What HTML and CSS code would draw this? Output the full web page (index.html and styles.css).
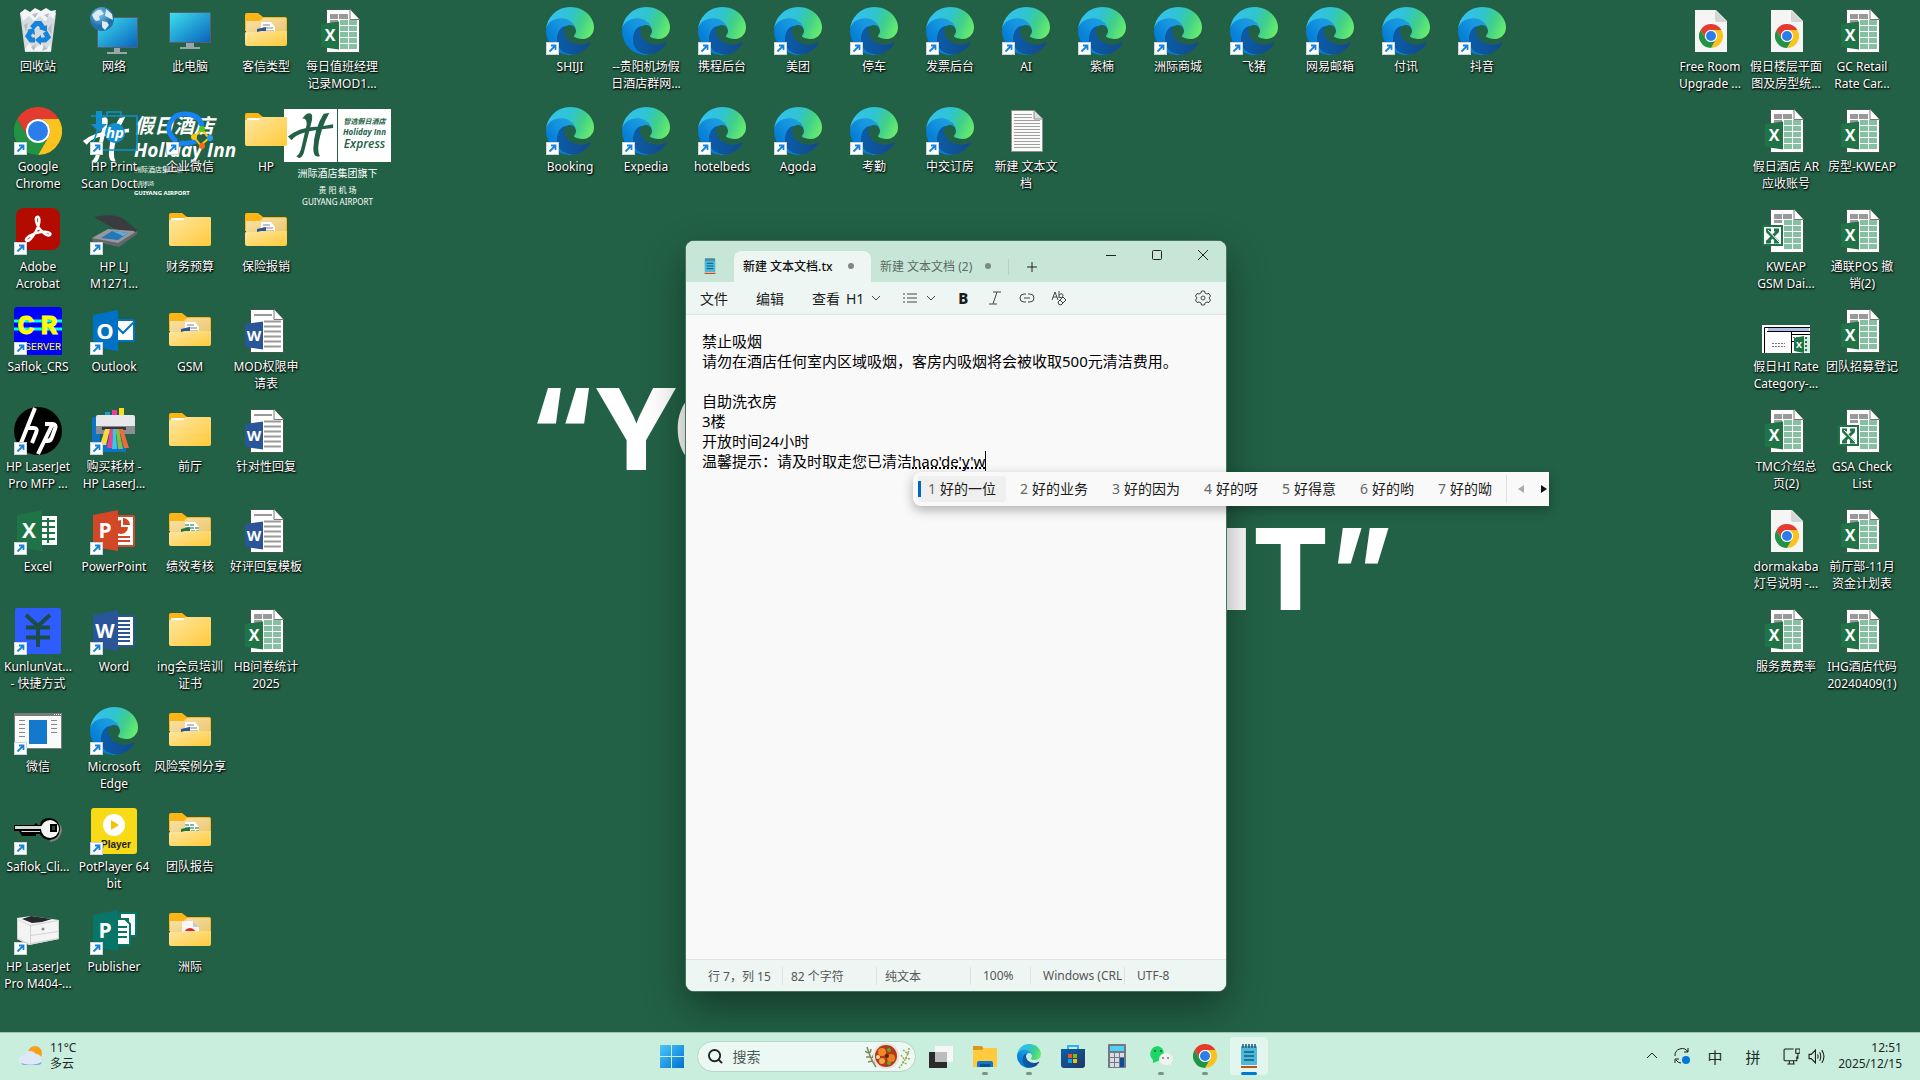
FILE: index.html
```html
<!DOCTYPE html>
<html lang="zh-CN">
  <head>
    <meta charset="UTF-8" />
    <meta name="viewport" content="width=device-width, initial-scale=1.0" />
    <title>桌面</title>
    <link rel="stylesheet" href="styles.css">
  </head>
  <body>
    <!-- Shared gradients, kept apart because they need a rendered svg -->
    <svg class="paints" aria-hidden="true">
      <defs>
        <linearGradient id="gScreen" x1="0" y1="0" x2="1" y2="1"><stop offset="0" stop-color="#3ce0ee" /><stop offset="1" stop-color="#0a62bd" /></linearGradient>
        <linearGradient id="gFolder" x1="0" y1="0" x2="1" y2="1"><stop offset="0" stop-color="#ffe7a2" /><stop offset="1" stop-color="#ffca3a" /></linearGradient>
        <linearGradient id="gFolderIn" x1="0" y1="0" x2="1" y2="1"><stop offset="0" stop-color="#fbe3a8" /><stop offset="1" stop-color="#e8c46c" /></linearGradient>
        <linearGradient id="gEdgeDark" x1="0.2" y1="0" x2="1" y2="0"><stop offset="0" stop-color="#0c59a4" /><stop offset="1" stop-color="#114a8b" /></linearGradient>
        <linearGradient id="gEdgeBlue" x1="0.9" y1="0.3" x2="0.2" y2="1"><stop offset="0" stop-color="#1b9de2" /><stop offset="0.3" stop-color="#1595df" /><stop offset="0.7" stop-color="#0680d7" /><stop offset="1" stop-color="#0078d4" /></linearGradient>
        <linearGradient id="gEdgeGreen" x1="0" y1="0.3" x2="1" y2="0.6"><stop offset="0" stop-color="#35c1f1" /><stop offset="0.45" stop-color="#2fc4d0" /><stop offset="0.72" stop-color="#40cf8b" /><stop offset="1" stop-color="#66eb6e" /></linearGradient>
        <linearGradient id="gWin" x1="0" y1="0" x2="1" y2="1"><stop offset="0" stop-color="#4cc8fa" /><stop offset="1" stop-color="#0070cf" /></linearGradient>
        <radialGradient id="gGlobe" cx="0.4" cy="0.3"><stop offset="0" stop-color="#7cc8ee" /><stop offset="1" stop-color="#246fa8" /></radialGradient>
        <linearGradient id="gStore" x1="0" y1="0" x2="1" y2="1"><stop offset="0" stop-color="#0e5ea5" /><stop offset="1" stop-color="#213765" /></linearGradient>
      </defs>
    </svg>

    <!-- Icon library -->
    <svg class="sprite" aria-hidden="true">
      <symbol id="arrow" viewBox="0 0 48 48">
        <rect x="0.500" y="35.500" width="12" height="12" fill="#fff" stroke="#c9d4dc" />
        <path d="M3.500 44.500L9 39M5 38.500H9.500V43" fill="none" stroke="#1683dc" stroke-width="1.800" />
      </symbol>

      <symbol id="edge" viewBox="0 0 256 256">
        <path fill="url(#gEdgeBlue)" d="M105.7 241.4a79.2 79.2 0 0 1-22.7-21.3 80.7 80.7 0 0 1 29.5-120c3.2-1.5 8.500-4.1 15.6-4a32.4 32.4 0 0 1 25.7 13 31.9 31.9 0 0 1 6.3 18.7c0-.2 24.5-79.6-80-79.6-43.9 0-80 41.6-80 78.2a130.2 130.2 0 0 0 12.1 56 128 128 0 0 0 156.4 67 75.5 75.5 0 0 1-62.8-8Z" />
        <path fill="url(#gEdgeDark)" d="M231 190.5c-3.4 1.8-6.9 3.4-10.5 4.7a101 101 0 0 1-35.9 6.4c-47.3 0-88.5-32.5-88.5-74.3a31.5 31.5 0 0 1 16.4-27.3c-42.8 1.8-53.8 46.4-53.8 72.5 0 74 68.1 81.4 82.8 81.4 7.9 0 19.8-2.3 27-4.6l1.3-.4a128.3 128.3 0 0 0 66.6-52.8 4 4 0 0 0-5.400-5.600Z" />
        <path fill="url(#gEdgeGreen)" d="M152.3 148.900c-.9 1-3.4 2.5-3.4 5.6 0 2.6 1.7 5.2 4.8 7.3 14.3 10 41.4 8.6 41.5 8.6a59.6 59.6 0 0 0 30.3-8.3 61.400 61.400 0 0 0 30.4-52.9c.3-22.4-8-37.3-11.3-43.9C223.5 23.9 177.7 0 128 0A128 128 0 0 0 0 126.2c.5-36.5 36.800-66 80-66 3.5 0 23.500.3 42 10a72.600 72.600 0 0 1 30.9 29.3c6.1 10.6 7.2 24.1 7.2 29.5s-2.7 13.3-7.8 19.9Z" />
      </symbol>

      <symbol id="chrome" viewBox="0 0 48 48">
        <path fill="#e33b2e" d="M24 12H44.8A24 24 0 0 0 3.2 12L13.6 30A12 12 0 0 1 24 12Z" />
        <path fill="#fcc31e" d="M44.8 12A24 24 0 0 1 24 48L34.4 30A12 12 0 0 0 24 12Z" />
        <path fill="#229342" d="M3.2 12A24 24 0 0 0 24 48L34.4 30A12 12 0 0 1 13.6 30Z" />
        <circle cx="24" cy="24" r="12" fill="#fff" />
        <circle cx="24" cy="24" r="10" fill="#2b7de9" />
      </symbol>

      <symbol id="bin" viewBox="0 0 48 48">
        <path fill="#d5dbdf" d="M6 6L42 6L37 45H11Z" />
        <path fill="#f3f5f6" d="M6 6L11 2L16 5L21 1L27 4L32 1L37 4L42 3L40 12L36 9L31 14L26 9L20 14L15 9L9 14ZM11 42L15 36L20 42L27 37L33 43L36 36L37 44H11Z" />
        <path fill="#b4bdc4" d="M10 18L14 16L12 25ZM38 16L34 22L37 27ZM17 40L22 37L20 44ZM30 38L33 42L28 44ZM18 7L24 6L21 11ZM30 8L35 6L34 11Z" />
        <g fill="none" stroke="#1583dc" stroke-width="5">
          <path d="M18 21L22 16.500H26L29 21" />
          <path d="M31 25L34 30L31 33H26" />
          <path d="M21 33H17L14 29L17 24" />
        </g>
        <path fill="#1583dc" d="M25 22L33 18V25ZM27 28V38L21 33ZM13 23L20 21L21 28Z" />
      </symbol>

      <symbol id="monitor" viewBox="0 0 48 48">
        <rect x="3" y="5" width="42" height="31" rx="1" fill="#566069" />
        <rect x="4" y="6" width="40" height="29" fill="url(#gScreen)" />
        <path fill="#9aa4ab" d="M20 36H28V40H34V42H14V40H20Z" />
      </symbol>

      <symbol id="network" viewBox="0 0 48 48">
        <rect x="7" y="10" width="41" height="31" rx="1" fill="#566069" />
        <rect x="8" y="11" width="39" height="29" fill="url(#gScreen)" />
        <path fill="#9aa4ab" d="M24 41H30V45H37V47H17V45H24Z" />
        <circle cx="12" cy="12" r="12" fill="url(#gGlobe)" />
        <path fill="#dcecf5" d="M2 8Q7 2 11 3L14 7L9 9L10 13L6 14L4 12ZM16 2L22 7L23 13L19 11L15 9ZM12 14L17 15L19 18L15 23L12 20Z" />
      </symbol>

      <symbol id="folder" viewBox="0 0 48 48">
        <path fill="#fcb514" d="M3 8Q3 6 5 6H16L21 10H43Q45 10 45 12V24H3Z" />
        <rect x="5" y="11" width="14" height="4" rx="1" fill="#fff" />
        <path fill="url(#gFolder)" d="M3 14Q3 13 4 13H17L20 10H44Q45 10 45 12V37Q45 39 43 39H5Q3 39 3 37Z" />
      </symbol>

      <symbol id="folderBase" viewBox="0 0 48 48">
        <path fill="#fcb514" d="M3 8Q3 6 5 6H16L21 10H43Q45 10 45 12V24H3Z" />
        <path fill="url(#gFolderIn)" d="M4 14L18 14L21 11H44V30H4Z" />
      </symbol>
      <symbol id="folderFront" viewBox="0 0 48 48">
        <path fill="url(#gFolder)" d="M3 26Q3 25 5 25H15L19 24H45V37Q45 39 43 39H5Q3 39 3 37Z" />
      </symbol>
      <symbol id="folderDoc" viewBox="0 0 48 48">
        <use href="#folderBase" />
        <path fill="#fff" d="M19 15H29L33 20V26H19Z" />
        <path stroke="#a9acb0" stroke-width="1.500" d="M21 18H28M21 21H31M23 24H32" />
        <path fill="#2b579a" d="M15 22L24 20V25H15Z" />
        <use href="#folderFront" />
      </symbol>
      <symbol id="folderSheet" viewBox="0 0 48 48">
        <use href="#folderBase" />
        <path fill="#fff" d="M19 15H29L33 20V26H19Z" />
        <path stroke="#7fb997" stroke-width="2" stroke-dasharray="4 1" d="M19 18H29M19 21H33M20 24H33" />
        <path fill="#217346" d="M15 22L24 20V25H15Z" />
        <use href="#folderFront" />
      </symbol>
      <symbol id="folderPdf" viewBox="0 0 48 48">
        <use href="#folderBase" />
        <path fill="#f7f7f7" d="M16 14H27L33 20V27H16Z" />
        <path fill="#c9c9c9" d="M27 14L33 20H27Z" />
        <circle cx="24" cy="27" r="6" fill="#d92b2b" />
        <use href="#folderFront" />
      </symbol>

      <symbol id="page" viewBox="0 0 48 48">
        <path fill="#fff" stroke="#3d5a4a" d="M8.500 2.500H32L41.500 12.500V45.500H8.500Z" />
        <path fill="#fff" stroke="#777" d="M32 2.500V12.500H41.500" />
      </symbol>
      <symbol id="sheet" viewBox="0 0 48 48">
        <use href="#page" />
        <path fill="#999" d="M12 7H20V12H12ZM21 7H30V12H21ZM12 13H20V16H12Z" />
        <path fill="#86bfa1" d="M22 13H30V18H22ZM31 13H39V18H31ZM22 19H30V24H22ZM31 19H39V24H31ZM22 25H30V30H22ZM31 25H39V30H31ZM22 31H30V36H22ZM31 31H39V36H31ZM22 37H30V42H22ZM31 37H39V42H31Z" />
      </symbol>
      <symbol id="xlsx" viewBox="0 0 48 48">
        <use href="#sheet" />
        <path fill="#1f7346" d="M3 17L21 14.500V42.500L3 40Z" />
        <text x="12" y="34" class="letter" font-size="16">X</text>
      </symbol>
      <symbol id="xls" viewBox="0 0 48 48">
        <use href="#sheet" />
        <rect x="0" y="18" width="21" height="21" fill="#1f7346" />
        <rect x="2" y="20" width="17" height="17" fill="#fff" />
        <path stroke="#1f7346" stroke-width="3" d="M4 23H9M12 23H17M5 24L16 35M16 24L5 35M4 35H9M12 35H17" />
        <path stroke="#fff" d="M6 23L17 35" />
      </symbol>
      <symbol id="docx" viewBox="0 0 48 48">
        <use href="#page" />
        <path stroke="#999" stroke-width="2" d="M12 8H30M22 14.500H39M22 19.500H39M22 24.500H39M22 29.500H39M22 34.500H39M22 39.500H39" />
        <path fill="#2a5699" d="M3 17L21 14.500V42.500L3 40Z" />
        <text x="12" y="34" class="letter" font-size="15">W</text>
      </symbol>
      <symbol id="chromeDoc" viewBox="0 0 48 48">
        <path fill="#f5f5f5" d="M9 3H30L41 14V45H9Z" />
        <path fill="#d5d5d5" d="M29 3L41 15H31Q29 15 29 13Z" />
        <use href="#chrome" x="13" y="17" width="24" height="24" />
      </symbol>
      <symbol id="txt" viewBox="0 0 48 48">
        <path fill="#fafafa" stroke="#909090" d="M9.500 3.500H32L40.500 12V44.500H9.500Z" />
        <path fill="#ddd" stroke="#909090" d="M32 3.500V12H40.500" />
        <path stroke="#a0a0a0" d="M12 7.500H30M12 10.500H30M12 13.500H38M12 16.500H38M12 19.500H38M12 22.500H38M12 25.500H38M12 28.500H38M12 31.500H38M12 34.500H38M12 37.500H38M12 40.500H38" />
      </symbol>

      <symbol id="hpPrint" viewBox="0 0 48 48">
        <path fill="none" stroke="#1090d0" stroke-width="1.600" d="M1 9H6M12 9H47V43H1ZM17 9V5H31V9" />
        <path fill="#1090d0" d="M6 4H12V17H17L9 25L1 17H6Z" />
        <circle cx="25" cy="26" r="10" fill="#1090d0" />
        <text x="25" y="31" class="letter" font-size="15" font-style="italic">hp</text>
      </symbol>
      <symbol id="wecom" viewBox="0 0 48 48">
        <path fill="none" stroke="#1684f2" stroke-width="5" d="M30 34Q24 37 16 36L8 40L9 33Q0 25 4 16Q9 6 20 7Q34 8 36 19" />
        <path d="M36 23L43 31M28 30L36 23M28 30L35 39M43 31L35 38" stroke="#fbc513" stroke-width="2" />
        <circle cx="36" cy="22" r="3" fill="#4fcc16" />
        <circle cx="28" cy="30" r="3" fill="#fbc513" />
        <circle cx="44" cy="31" r="3" fill="#259bf0" />
        <circle cx="36" cy="39" r="3" fill="#f96a16" />
      </symbol>
      <symbol id="acrobat" viewBox="0 0 48 48">
        <rect x="2" y="1" width="44" height="42" rx="8" fill="#b30b00" />
        <path fill="none" stroke="#fff" stroke-width="2.500" d="M23 10C26 9 26 15 24 20C21 27 16 34 13 34C9 32 18 26 27 25C33 24 38 26 36 28C33 30 25 23 23 17C21 12 22 10 23 10Z" />
      </symbol>
      <symbol id="scanner" viewBox="0 0 48 48">
        <path fill="#393b3e" d="M4 10Q22 6 32 11L47 23L43 26Q26 24 16 17Q9 13 4 10Z" />
        <path fill="#96989b" d="M2 31L18 22L44 24L46 27L29 38L2 34Z" />
        <path fill="#2478b8" d="M11 31L22 24L38 26L28 33Z" />
        <path fill="#67a8d8" d="M22 24L38 26L33 29Z" />
        <path fill="#63666a" d="M2 31L28 36L47 24V27L29 40L2 34Z" />
      </symbol>
      <symbol id="crs" viewBox="0 0 48 48">
        <path fill="#00f" d="M2 0H46L48 2V48H0V2Z" />
        <path stroke="#0ff" stroke-width="3" d="M0 14H48M0 22H48" />
        <text x="12" y="27" font-size="28" class="pixel bold">C</text>
        <text x="35" y="27" font-size="28" class="pixel bold">R</text>
        <text x="29" y="43" font-size="10" class="pixel">SERVER</text>
      </symbol>
      <symbol id="outlook" viewBox="0 0 48 48">
        <rect x="26" y="12" width="19" height="23" rx="2" fill="#0072c6" />
        <path fill="#fff" d="M28 14H43V33H28Z" />
        <path fill="none" stroke="#0072c6" stroke-width="2" d="M26 19L33 26L44 15" />
        <path fill="#0072c6" d="M3 8L28 3V44L3 40Z" />
        <text x="15" y="32" class="letter" font-size="22">O</text>
      </symbol>
      <symbol id="excel" viewBox="0 0 48 48">
        <rect x="24" y="9" width="19" height="29" fill="#fff" />
        <path stroke="#1f7346" stroke-width="2" d="M28 14H41M28 20H41M28 26H41M28 32H41M34 11V36" />
        <path fill="#1f7346" d="M3 8L28 3V44L3 40Z" />
        <text x="15" y="31" class="letter" font-size="21">X</text>
      </symbol>
      <symbol id="powerpoint" viewBox="0 0 48 48">
        <rect x="26" y="8" width="19" height="32" rx="2" fill="#d24726" />
        <rect x="28" y="10" width="15" height="28" fill="#fff" />
        <path fill="#d24726" d="M31 13A7 7 0 1 0 38 20H31ZM33 11A7 7 0 0 1 40 18H33ZM28 29H40V31H28ZM28 33H40V35H28Z" />
        <path fill="#d24726" d="M3 8L28 3V44L3 40Z" />
        <text x="15" y="31" class="letter" font-size="21">P</text>
      </symbol>
      <symbol id="word" viewBox="0 0 48 48">
        <rect x="26" y="8" width="19" height="32" rx="2" fill="#2a5699" />
        <rect x="27" y="10" width="16" height="28" fill="#fff" />
        <path stroke="#2a5699" stroke-width="2" d="M27 14H40M27 18H40M27 22H40M27 26H40M27 30H40M27 34H40" />
        <path fill="#2a5699" d="M3 8L28 3V44L3 40Z" />
        <text x="15" y="31" class="letter" font-size="20">W</text>
      </symbol>
      <symbol id="publisher" viewBox="0 0 48 48">
        <path fill="#fff" stroke="#077568" stroke-width="2" d="M30 6H46V29H38V12H30Z" />
        <path fill="#fff" stroke="#077568" stroke-width="2" d="M24 12H35L40 17V38H24Z" />
        <path stroke="#077568" stroke-width="2" d="M27 20H37M27 25H37M27 30H37" />
        <path fill="#077568" d="M3 8L28 3V44L3 40Z" />
        <text x="15" y="31" class="letter" font-size="21">P</text>
      </symbol>
      <symbol id="hp" viewBox="0 0 48 48">
        <circle cx="24" cy="24" r="24" />
        <path stroke="#fff" stroke-width="4" fill="none" d="M21 1L7 36M13 21H20Q24 21 22 26L18 36M39 16L24 47M31 17H38Q43 17 41 22L38 30Q37 34 33 34H29" />
      </symbol>
      <symbol id="supplies" viewBox="0 0 48 48">
        <path fill="#0b74c8" d="M2 11L10 8V36L36 35V45H13L2 37Z" />
        <path fill="#2196e8" d="M15 5H20V9H15Z" /><path fill="#ec3d96" d="M22 3H27V9H22Z" /><path fill="#f3df1c" d="M29 1H34V9H29Z" />
        <rect x="6" y="8" width="39" height="14" rx="2" fill="#e8e8ea" />
        <path fill="#8b8d92" d="M6 19H45V27H6Z" />
        <path fill="#34363b" d="M12 20H36V23H12Z" />
        <path fill="#f7d943" d="M15 22L10 38H16L20 22Z" /><path fill="#e94394" d="M20 22L17 41H22L23 22Z" /><path fill="#45c1e5" d="M23 22L22 42H27L26 22Z" /><path fill="#82bf42" d="M26 22L28 42H33L29 22Z" /><path fill="#ee6b3b" d="M29 22L34 41H39L33 22Z" />
      </symbol>
      <symbol id="kunlun" viewBox="0 0 48 48">
        <rect x="1" y="1" width="46" height="46" rx="2" fill="#2f5cff" />
        <path fill="none" stroke="#1c4c45" stroke-width="4" d="M12 8L24 19L36 8M12 20.500H36M12 30.500H36M24 19V40" />
      </symbol>
      <symbol id="appwin" viewBox="0 0 48 48">
        <rect x="0" y="6" width="48" height="36" fill="#7b7b7b" />
        <rect x="1" y="9" width="46" height="32" fill="#fafafa" />
        <rect x="15" y="13" width="18" height="24" fill="#1479cc" />
        <path stroke="#888" d="M5 13.500H11M5 17.500H11M5 21.500H11M5 25.500H11M5 29.500H11M37 13.500H43M37 17.500H43M37 21.500H43M37 25.500H43" />
        <path stroke="#fff" stroke-dasharray="1 1" d="M40 7.500H47" />
      </symbol>
      <symbol id="key" viewBox="0 0 48 48">
        <path fill="#808080" d="M38 13Q48 15 48 24Q46 34 36 35Z" />
        <path fill="#000" d="M0 18H20L22 16L24 18H26Q27 11 35 11Q46 12 46 22Q45 33 35 33Q28 32 26 27H22V29H8L5 24H0Z" />
        <path fill="#d8d8d8" d="M1 19H28V22H1ZM7 24H26V25H8Z" />
        <circle cx="36" cy="22" r="9" fill="#f4f4f4" />
        <rect x="37" y="18" width="5" height="6" fill="#1c4c34" stroke="#000" stroke-width="2" />
      </symbol>
      <symbol id="pot" viewBox="0 0 48 48">
        <rect x="1" y="1" width="46" height="46" rx="3" fill="#f8da16" />
        <circle cx="24" cy="18" r="11" fill="#fff" />
        <path fill="#f0c400" d="M21 13L29 18L21 23Z" />
        <text x="26" y="41" class="letter dark" font-size="10">Player</text>
      </symbol>
      <symbol id="laser" viewBox="0 0 48 48">
        <path fill="#f2f2f2" d="M3 11L17 9L45 13V32L15 38L3 32Z" />
        <path fill="#d2d3d5" d="M3 12L16 18L45 13V32L15 38L3 32Z" />
        <path fill="#f4f4f4" d="M4 13L16 19V37L4 31ZM17 19L44 14V24L17 28ZM17 29L44 25V31L17 36Z" />
        <path fill="#26282b" d="M8 12L17 9L38 12L28 15L18 16Z" />
        <circle cx="29" cy="22" r="1.500" fill="#888" />
      </symbol>
      <symbol id="thumb" viewBox="0 0 48 48">
        <rect x="0" y="18" width="48" height="28" fill="#fff" />
        <path stroke="#000" fill="none" d="M2.500 46V20.500H48M5 24.500H48M29.500 22V46M29 27.500H48M29 34.500H34" />
        <path fill="#aebfe4" d="M6 21H47V24H6Z" />
        <path stroke="#777" stroke-dasharray="2 1" d="M10 36.500H23M10 39.500H23M31 30.500H39" />
        <rect x="40" y="30" width="8" height="15" fill="#d6ecdf" />
        <path stroke="#217346" stroke-width="2" stroke-dasharray="2 2" d="M44 30V45" />
        <path fill="#1f7346" d="M32 31L42 29V46L32 44Z" />
        <text x="37" y="41" class="letter" font-size="9">X</text>
      </symbol>

      <symbol id="notepad" viewBox="0 0 24 24">
        <path fill="#b4551b" d="M4 21H20V24H4Z" />
        <path fill="#f3efe9" d="M4 20H20V22H4Z" />
        <rect x="4" y="2" width="16" height="19" rx="1" fill="#4cb8da" />
        <path stroke="#105f84" stroke-width="1.500" d="M7 8H17M7 12H17M7 16H17" />
        <path stroke="#1d5670" stroke-width="1.500" d="M6 0V4M9 0V4M12 0V4M15 0V4M18 0V4" />
      </symbol>
      <symbol id="holidayMark" viewBox="0 0 48 52">
        <path d="M20 3Q28 0 25 12L17 44Q14 53 9 48Q13 46 15 36L20 14Q20 7 15 8ZM38 3L44 2Q36 16 33 32Q31 44 34 48Q27 50 27 40Q28 18 38 3ZM0 27Q12 18 26 17Q38 16 48 14V18Q28 20 17 23Q7 26 4 31Z" />
      </symbol>
    </svg>

    <main class="desktop">
      <!-- Wallpaper artwork -->
      <div class="wallpaper">
        <p class="slogan slogan-top">“YO</p>
        <p class="slogan slogan-bottom">IT”</p>
        <div class="brand brand-inn">
          <svg class="brand-h"><use href="#holidayMark" /></svg>
          <div class="brand-words">
            <span class="brand-cn">假日酒店</span>
            <span class="brand-en">Holiday Inn</span>
            <span class="brand-small">洲际酒店集团旗下</span>
            <span class="brand-tiny">贵阳机场</span>
            <span class="brand-city">GUIYANG AIRPORT</span>
          </div>
        </div>
        <div class="brand brand-express">
          <div class="brand-card">
            <div class="card-mark"><svg><use href="#holidayMark" /></svg></div>
            <div class="card-words">
              <span class="card-cn">智选假日酒店</span>
              <span class="card-en">Holiday Inn</span>
              <span class="card-exp">Express</span>
            </div>
          </div>
          <span class="express-group">洲际酒店集团旗下</span>
          <span class="express-place">贵 阳 机 场</span>
          <span class="express-city">GUIYANG AIRPORT</span>
        </div>
      </div>

      <div class="group">
        <div class="column">
          <a class="shortcut" href="#"><svg><use href="#bin" /></svg><span>回收站</span></a>
          <a class="shortcut" href="#"><svg><use href="#chrome" /><use href="#arrow" /></svg><span>Google<br>Chrome</span></a>
          <a class="shortcut" href="#"><svg><use href="#acrobat" /><use href="#arrow" /></svg><span>Adobe<br>Acrobat</span></a>
          <a class="shortcut" href="#"><svg><use href="#crs" /><use href="#arrow" /></svg><span>Saflok_CRS</span></a>
          <a class="shortcut" href="#"><svg><use href="#hp" /><use href="#arrow" /></svg><span>HP LaserJet<br>Pro MFP ...</span></a>
          <a class="shortcut" href="#"><svg><use href="#excel" /><use href="#arrow" /></svg><span>Excel</span></a>
          <a class="shortcut" href="#"><svg><use href="#kunlun" /><use href="#arrow" /></svg><span>KunlunVat...<br>- 快捷方式</span></a>
          <a class="shortcut" href="#"><svg><use href="#appwin" /><use href="#arrow" /></svg><span>微信</span></a>
          <a class="shortcut" href="#"><svg><use href="#key" /><use href="#arrow" /></svg><span>Saflok_Cli...</span></a>
          <a class="shortcut" href="#"><svg><use href="#laser" /><use href="#arrow" /></svg><span>HP LaserJet<br>Pro M404-...</span></a>
        </div>
        <div class="column">
          <a class="shortcut" href="#"><svg><use href="#network" /></svg><span>网络</span></a>
          <a class="shortcut" href="#"><svg><use href="#hpPrint" /><use href="#arrow" /></svg><span>HP Print<br>Scan Doct...</span></a>
          <a class="shortcut" href="#"><svg><use href="#scanner" /><use href="#arrow" /></svg><span>HP LJ<br>M1271...</span></a>
          <a class="shortcut" href="#"><svg><use href="#outlook" /><use href="#arrow" /></svg><span>Outlook</span></a>
          <a class="shortcut" href="#"><svg><use href="#supplies" /><use href="#arrow" /></svg><span>购买耗材 -<br>HP LaserJ...</span></a>
          <a class="shortcut" href="#"><svg><use href="#powerpoint" /><use href="#arrow" /></svg><span>PowerPoint</span></a>
          <a class="shortcut" href="#"><svg><use href="#word" /><use href="#arrow" /></svg><span>Word</span></a>
          <a class="shortcut" href="#"><svg><use href="#edge" /><use href="#arrow" /></svg><span>Microsoft<br>Edge</span></a>
          <a class="shortcut" href="#"><svg><use href="#pot" /><use href="#arrow" /></svg><span>PotPlayer 64<br>bit</span></a>
          <a class="shortcut" href="#"><svg><use href="#publisher" /><use href="#arrow" /></svg><span>Publisher</span></a>
        </div>
        <div class="column">
          <a class="shortcut" href="#"><svg><use href="#monitor" /></svg><span>此电脑</span></a>
          <a class="shortcut" href="#"><svg><use href="#wecom" /><use href="#arrow" /></svg><span>企业微信</span></a>
          <a class="shortcut" href="#"><svg><use href="#folder" /></svg><span>财务预算</span></a>
          <a class="shortcut" href="#"><svg><use href="#folderDoc" /></svg><span>GSM</span></a>
          <a class="shortcut" href="#"><svg><use href="#folder" /></svg><span>前厅</span></a>
          <a class="shortcut" href="#"><svg><use href="#folderSheet" /></svg><span>绩效考核</span></a>
          <a class="shortcut" href="#"><svg><use href="#folder" /></svg><span>ing会员培训<br>证书</span></a>
          <a class="shortcut" href="#"><svg><use href="#folderDoc" /></svg><span>风险案例分享</span></a>
          <a class="shortcut" href="#"><svg><use href="#folderSheet" /></svg><span>团队报告</span></a>
          <a class="shortcut" href="#"><svg><use href="#folderPdf" /></svg><span>洲际</span></a>
        </div>
        <div class="column">
          <a class="shortcut" href="#"><svg><use href="#folderDoc" /></svg><span>客信类型</span></a>
          <a class="shortcut" href="#"><svg><use href="#folder" /></svg><span>HP</span></a>
          <a class="shortcut" href="#"><svg><use href="#folderDoc" /></svg><span>保险报销</span></a>
          <a class="shortcut" href="#"><svg><use href="#docx" /></svg><span>MOD权限申<br>请表</span></a>
          <a class="shortcut" href="#"><svg><use href="#docx" /></svg><span>针对性回复</span></a>
          <a class="shortcut" href="#"><svg><use href="#docx" /></svg><span>好评回复模板</span></a>
          <a class="shortcut" href="#"><svg><use href="#xlsx" /></svg><span>HB问卷统计<br>2025</span></a>
        </div>
        <div class="column">
          <a class="shortcut" href="#"><svg><use href="#xlsx" /></svg><span>每日值班经理<br>记录MOD1...</span></a>
        </div>
      </div>

      <div class="group group-web">
        <div class="column">
          <a class="shortcut" href="#"><svg><use href="#edge" /><use href="#arrow" /></svg><span>SHIJI</span></a>
          <a class="shortcut" href="#"><svg><use href="#edge" /><use href="#arrow" /></svg><span>Booking</span></a>
        </div>
        <div class="column">
          <a class="shortcut" href="#"><svg><use href="#edge" /></svg><span>--贵阳机场假<br>日酒店群网...</span></a>
          <a class="shortcut" href="#"><svg><use href="#edge" /><use href="#arrow" /></svg><span>Expedia</span></a>
        </div>
        <div class="column">
          <a class="shortcut" href="#"><svg><use href="#edge" /><use href="#arrow" /></svg><span>携程后台</span></a>
          <a class="shortcut" href="#"><svg><use href="#edge" /><use href="#arrow" /></svg><span>hotelbeds</span></a>
        </div>
        <div class="column">
          <a class="shortcut" href="#"><svg><use href="#edge" /><use href="#arrow" /></svg><span>美团</span></a>
          <a class="shortcut" href="#"><svg><use href="#edge" /><use href="#arrow" /></svg><span>Agoda</span></a>
        </div>
        <div class="column">
          <a class="shortcut" href="#"><svg><use href="#edge" /><use href="#arrow" /></svg><span>停车</span></a>
          <a class="shortcut" href="#"><svg><use href="#edge" /><use href="#arrow" /></svg><span>考勤</span></a>
        </div>
        <div class="column">
          <a class="shortcut" href="#"><svg><use href="#edge" /><use href="#arrow" /></svg><span>发票后台</span></a>
          <a class="shortcut" href="#"><svg><use href="#edge" /><use href="#arrow" /></svg><span>中交订房</span></a>
        </div>
        <div class="column">
          <a class="shortcut" href="#"><svg><use href="#edge" /><use href="#arrow" /></svg><span>AI</span></a>
          <a class="shortcut" href="#"><svg><use href="#txt" /></svg><span>新建 文本文<br>档</span></a>
        </div>
        <div class="column"><a class="shortcut" href="#"><svg><use href="#edge" /><use href="#arrow" /></svg><span>紫楠</span></a></div>
        <div class="column"><a class="shortcut" href="#"><svg><use href="#edge" /><use href="#arrow" /></svg><span>洲际商城</span></a></div>
        <div class="column"><a class="shortcut" href="#"><svg><use href="#edge" /><use href="#arrow" /></svg><span>飞猪</span></a></div>
        <div class="column"><a class="shortcut" href="#"><svg><use href="#edge" /><use href="#arrow" /></svg><span>网易邮箱</span></a></div>
        <div class="column"><a class="shortcut" href="#"><svg><use href="#edge" /><use href="#arrow" /></svg><span>付讯</span></a></div>
        <div class="column"><a class="shortcut" href="#"><svg><use href="#edge" /><use href="#arrow" /></svg><span>抖音</span></a></div>
      </div>

      <div class="group group-files">
        <div class="column">
          <a class="shortcut" href="#"><svg><use href="#chromeDoc" /></svg><span>Free Room<br>Upgrade ...</span></a>
        </div>
        <div class="column">
          <a class="shortcut" href="#"><svg><use href="#chromeDoc" /></svg><span>假日楼层平面<br>图及房型统...</span></a>
          <a class="shortcut" href="#"><svg><use href="#xlsx" /></svg><span>假日酒店 AR<br>应收账号</span></a>
          <a class="shortcut" href="#"><svg><use href="#xls" /></svg><span>KWEAP<br>GSM Dai...</span></a>
          <a class="shortcut" href="#"><svg><use href="#thumb" /></svg><span>假日HI Rate<br>Category-...</span></a>
          <a class="shortcut" href="#"><svg><use href="#xlsx" /></svg><span>TMC介绍总<br>页(2)</span></a>
          <a class="shortcut" href="#"><svg><use href="#chromeDoc" /></svg><span>dormakaba<br>灯号说明 -...</span></a>
          <a class="shortcut" href="#"><svg><use href="#xlsx" /></svg><span>服务费费率</span></a>
        </div>
        <div class="column">
          <a class="shortcut" href="#"><svg><use href="#xlsx" /></svg><span>GC Retail<br>Rate Car...</span></a>
          <a class="shortcut" href="#"><svg><use href="#xlsx" /></svg><span>房型-KWEAP</span></a>
          <a class="shortcut" href="#"><svg><use href="#xlsx" /></svg><span>通联POS 撤<br>销(2)</span></a>
          <a class="shortcut" href="#"><svg><use href="#xlsx" /></svg><span>团队招募登记</span></a>
          <a class="shortcut" href="#"><svg><use href="#xls" /></svg><span>GSA Check<br>List</span></a>
          <a class="shortcut" href="#"><svg><use href="#xlsx" /></svg><span>前厅部-11月<br>资金计划表</span></a>
          <a class="shortcut" href="#"><svg><use href="#xlsx" /></svg><span>IHG酒店代码<br>20240409(1)</span></a>
        </div>
      </div>

      <!-- Notepad -->
      <section class="window" aria-label="记事本">
        <header class="titlebar">
          <svg class="app-icon"><use href="#notepad" /></svg>
          <div class="tabs">
            <button class="tab active"><span>新建 文本文档.tx</span><i class="dot"></i></button>
            <button class="tab"><span>新建 文本文档 (2)</span><i class="dot"></i></button>
            <button class="new-tab" aria-label="新建标签页"><svg viewBox="0 0 10 10"><path d="M5 0V10M0 5H10" /></svg></button>
          </div>
          <div class="controls">
            <button aria-label="最小化"><svg viewBox="0 0 10 10"><path d="M0 5.500H10" /></svg></button>
            <button aria-label="最大化"><svg viewBox="0 0 10 10"><rect x="0.500" y="0.500" width="9" height="9" rx="1" /></svg></button>
            <button aria-label="关闭"><svg viewBox="0 0 10 10"><path d="M0 0L10 10M10 0L0 10" /></svg></button>
          </div>
        </header>
        <nav class="toolbar">
          <div class="menus">
            <button>文件</button>
            <button>编辑</button>
            <button>查看</button>
          </div>
          <button class="heading">H1 <svg class="chevron" viewBox="0 0 8 5"><path d="M0 0L4 4L8 0" /></svg></button>
          <button class="list" aria-label="列表">
            <svg class="tool" viewBox="0 0 16 16"><path d="M5 4H15M5 8H15M5 12H15M1 4H3M1 8H3M1 12H3" /></svg>
            <svg class="chevron" viewBox="0 0 8 5"><path d="M0 0L4 4L8 0" /></svg>
          </button>
          <div class="formats">
            <button class="bold" aria-label="加粗">B</button>
            <button aria-label="斜体"><svg class="tool" viewBox="0 0 16 16"><path d="M6 2H14M2 14H10M10 2L6 14" /></svg></button>
            <button aria-label="链接"><svg class="tool" viewBox="0 0 16 16"><path d="M7 4H5A4 4 0 0 0 5 12H7M9 4H11A4 4 0 0 1 11 12H9M5 8H11" /></svg></button>
            <button aria-label="清除格式"><svg class="tool" viewBox="0 0 16 16"><path d="M1 10L4 2L7 10M2 7H6M8 1V8M8 5Q12 2 12 6Q11 9 8 7M7 12L12 7L15 10L10 15Q7 15 7 12M9 10L12 13" /></svg></button>
          </div>
          <button class="settings" aria-label="设置"><svg class="tool" viewBox="0 0 16 16"><path d="M6.500 1H9.500L10 3L12 4L14 3.500L15.500 6L14 8L15.500 10L14 12.500L12 12L10 13L9.500 15H6.500L6 13L4 12L2 12.500L0.500 10L2 8L0.500 6L2 3.500L4 4L6 3Z" /><circle cx="8" cy="8" r="2" /></svg></button>
        </nav>
        <div class="editor">
          <textarea aria-label="文本编辑器" spellcheck="false">禁止吸烟
请勿在酒店任何室内区域吸烟，客房内吸烟将会被收取500元清洁费用。

自助洗衣房
3楼
开放时间24小时
温馨提示：请及时取走您已清洁</textarea>
          <div class="composition"><span>hao'de'y'w</span></div>
          <div class="ime">
            <button class="candidate selected"><b>1</b>好的一位</button>
            <button class="candidate"><b>2</b>好的业务</button>
            <button class="candidate"><b>3</b>好的因为</button>
            <button class="candidate"><b>4</b>好的呀</button>
            <button class="candidate"><b>5</b>好得意</button>
            <button class="candidate"><b>6</b>好的哟</button>
            <button class="candidate"><b>7</b>好的呦</button>
            <div class="pager">
              <button aria-label="上一页"><svg viewBox="0 0 6 8"><path d="M6 0V8L0 4Z" fill="#aaa" /></svg></button>
              <button aria-label="下一页"><svg viewBox="0 0 6 8"><path d="M0 0V8L6 4Z" fill="#111" /></svg></button>
            </div>
          </div>
        </div>
        <footer class="status">
          <span class="status-pos">行 7，列 15</span>
          <span class="status-count">82 个字符</span>
          <span class="status-type">纯文本</span>
          <span class="status-zoom">100%</span>
          <span class="status-eol"><em>Windows (CRL</em></span>
          <span class="status-enc">UTF-8</span>
        </footer>
      </section>
    </main>

    <footer class="taskbar">
      <button class="weather">
        <svg viewBox="0 0 28 24"><circle cx="17" cy="9" r="7" fill="#f7a11b" /><path fill="#dfe8f7" d="M6 21A5 5 0 0 1 6 11A7 7 0 0 1 18 10A6 6 0 0 1 21 21Z" /><path fill="#7fa8e8" d="M3 19Q14 23 24 18Q23 21 20 21H6Q4 21 3 19Z" /></svg>
        <span>11°C<br>多云</span>
      </button>
      <div class="apps">
        <button class="app" aria-label="开始"><svg viewBox="0 0 24 24"><path fill="url(#gWin)" d="M0 1H11V12H0ZM12 1H24V12H12ZM0 13H11V24H0ZM12 13H24V24H12Z" /></svg></button>
        <div class="search">
          <label for="search" aria-label="搜索"><svg viewBox="0 0 16 16"><circle cx="7" cy="7" r="6" /><path d="M11 11L15 15" /></svg></label>
          <input id="search" type="search" placeholder="搜索" />
          <svg class="dish" viewBox="0 0 46 28" aria-hidden="true">
            <path fill="none" stroke="#7d8a5c" stroke-width="1.500" d="M2 5Q5 16 11 25M3 11L0 9M5 15L1 15M7 19L3 20M5 11L6 7M7 16L9 12M10 21L11 16" />
            <path fill="none" stroke="#9aad4e" stroke-width="1.500" stroke-dasharray="2 1" d="M44 6Q43 16 34 26M42 12L45 11M40 16L45 17M37 20L42 22M42 11L38 8M39 17L36 13" />
            <circle cx="21" cy="14" r="13" fill="#e9e2dc" /><circle cx="21" cy="14" r="11" fill="#b03a1c" />
            <circle cx="17" cy="10" r="4" fill="#ef8a24" /><circle cx="26" cy="16" r="4" fill="#ee7e1e" /><circle cx="17" cy="19" r="3" fill="#f3a542" /><circle cx="24" cy="8" r="2" fill="#6ea32d" /><circle cx="22" cy="14" r="2" fill="#5c2315" /><circle cx="24" cy="21" r="2" fill="#73a336" /><circle cx="13" cy="15" r="2" fill="#f6d9a0" />
          </svg>
        </div>
        <button class="app" aria-label="任务视图"><svg viewBox="0 0 24 24"><rect x="0" y="8" width="18" height="16" fill="#2b2b2b" /><rect x="6" y="2" width="18" height="16" fill="#f6f6f6" /><rect x="6" y="8" width="12" height="10" fill="#bcbcbc" /></svg></button>
        <button class="app running" aria-label="文件资源管理器"><svg viewBox="0 0 24 24"><path fill="#d9981d" d="M0 2H9L11 5V10H0Z" /><path fill="#ffcb3d" d="M0 6H9L11 4H24V23H0Z" /><path fill="#1076c9" d="M4 19Q4 17 6 17H18Q20 17 20 19V23H4Z" /><path fill="#0a4f8d" d="M7 20H17V23H7Z" /></svg></button>
        <button class="app running" aria-label="Edge"><svg><use href="#edge" /></svg></button>
        <button class="app" aria-label="应用商店"><svg viewBox="0 0 24 24"><path fill="none" stroke="#28b5f0" stroke-width="2" d="M7 6V2H17V6" /><path fill="url(#gStore)" d="M0 5H24V21Q24 24 21 24H3Q0 24 0 21Z" /><path fill="#f35325" d="M7 10H11V14H7Z" /><path fill="#81bc06" d="M12 10H16V14H12Z" /><path fill="#05a6f0" d="M7 15H11V19H7Z" /><path fill="#ffba08" d="M12 15H16V19H12Z" /></svg></button>
        <button class="app" aria-label="计算器"><svg viewBox="0 0 24 24"><rect x="3" y="0" width="18" height="24" rx="1" fill="#727983" /><rect x="5" y="2" width="14" height="5" fill="#4ed1f6" /><path fill="#d7dbe2" d="M5 9H9V13H5ZM10 9H14V13H10ZM15 9H19V13H15ZM5 14H9V18H5ZM10 14H14V18H10ZM5 19H9V23H5ZM10 19H14V23H10Z" /><path fill="#0d4c9c" d="M15 14H19V23H15Z" /></svg></button>
        <button class="app running" aria-label="微信"><svg viewBox="0 0 24 24"><path fill="#1fd565" d="M9 2A9 8 0 0 1 9 17L4 19L4 16A8 8 0 0 1 9 2Z" /><circle cx="6" cy="7" r="1" fill="#0d6a35" /><circle cx="12" cy="7" r="1" fill="#0d6a35" /><ellipse cx="17" cy="15" rx="7" ry="6" fill="#f1f1f1" /><path fill="#f1f1f1" d="M19 19L22 22V17Z" /><circle cx="14" cy="14" r="1" fill="#777" /><circle cx="19" cy="14" r="1" fill="#777" /></svg></button>
        <button class="app running" aria-label="Chrome"><svg><use href="#chrome" /></svg></button>
        <button class="app current" aria-label="记事本"><svg><use href="#notepad" /></svg></button>
      </div>
      <div class="tray">
        <button aria-label="显示隐藏的图标"><svg viewBox="0 0 16 16"><path d="M3 10L8 5L13 10" /></svg></button>
        <button class="sync" aria-label="同步"><svg viewBox="0 0 16 16"><path d="M1 8A7 7 0 0 1 14 4M14 0V4H10M1 15V11H5M2 12Q4 15 7 15" /><circle cx="12" cy="12" r="4" class="badge" /></svg></button>
        <button class="lang">中</button>
        <button class="lang">拼</button>
        <button class="system" aria-label="网络和音量">
          <svg viewBox="0 0 16 16"><path d="M10 1H2Q1 1 1 2V11Q1 12 2 12H13V8M4 15H11M6 12V15M10 12V15M12 1H16V5H12ZM14 5V10" /></svg>
          <svg viewBox="0 0 16 16"><path d="M1 6H3L7 2V14L3 10H1ZM9 6Q10 8 9 10M11 4Q13 8 11 12M13 2Q17 8 13 14" /></svg>
        </button>
        <time class="clock">12:51<br>2025/12/15</time>
      </div>
    </footer>
  </body>
</html>
```
FILE: styles.css
```css
* {
  box-sizing: border-box;
}
body {
  margin: 0;
  height: 100vh;
  display: flex;
  flex-direction: column;
  overflow: hidden;
  background-color: #226146;
  font-family: "Noto Sans", "Noto Sans CJK SC", sans-serif;
  font-size: 12px;
}
button {
  padding: 0;
  border: none;
  background: none;
  font: inherit;
  color: inherit;
}
.paints {
  position: absolute;
  width: 0;
  height: 0;
}
.sprite {
  display: none;
}
.letter {
  fill: #fff;
  font-family: "Open Sans", sans-serif;
  font-weight: 700;
  text-anchor: middle;
  text-shadow: none;
}
.letter.dark {
  fill: #222;
  font-family: "Liberation Sans", sans-serif;
}
.pixel {
  fill: #ff0;
  font-family: "Liberation Mono", monospace;
  text-anchor: middle;
  text-shadow: none;
}
.pixel.bold {
  font-weight: 700;
  stroke: #ff0;
}

/* Desktop */
.desktop {
  position: relative;
  flex: 1;
  display: flex;
  min-height: 0;
}
.group {
  position: relative;
  display: flex;
}
.group-web {
  margin-left: 152px;
}
.group-files {
  margin-left: auto;
  padding-right: 20px;
}
.column {
  width: 76px;
}
.shortcut {
  display: flex;
  flex-direction: column;
  align-items: center;
  gap: 3px;
  height: 100px;
  padding-top: 7px;
  color: #fff;
  line-height: 17px;
  text-align: center;
  text-decoration: none;
  white-space: nowrap;
  text-shadow: 1px 1px 2px #000, 0 1px 2px #000;
}
.shortcut svg {
  width: 48px;
  height: 48px;
  flex: none;
}

/* Wallpaper */
.wallpaper {
  position: absolute;
  inset: 0;
  color: #fff;
}
.slogan {
  position: absolute;
  margin: 0;
  font-family: Inter, sans-serif;
  font-size: 113px;
  font-weight: 800;
  line-height: 140px;
}
.slogan-top {
  left: 528px;
  top: 359px;
}
.slogan-bottom {
  left: 1220px;
  top: 499px;
}
.brand {
  position: absolute;
  display: flex;
}
.brand-inn {
  left: 82px;
  top: 115px;
  gap: 4px;
}
.brand-h {
  width: 48px;
  height: 50px;
  fill: #fff;
}
.brand-words {
  display: flex;
  flex-direction: column;
  white-space: nowrap;
}
.brand-cn {
  font-size: 20px;
  font-style: italic;
  font-weight: 700;
  line-height: 22px;
}
.brand-en {
  font-family: "Open Sans", sans-serif;
  font-size: 19px;
  font-style: italic;
  font-weight: 700;
  line-height: 26px;
}
.brand-small {
  font-size: 7px;
  line-height: 14px;
}
.brand-tiny {
  font-size: 5px;
  line-height: 12px;
}
.brand-city {
  font-size: 6px;
  font-weight: 700;
  line-height: 8px;
}
.brand-express {
  left: 284px;
  top: 109px;
  flex-direction: column;
  align-items: center;
}
.brand-card {
  display: flex;
  gap: 1px;
  margin-bottom: 2px;
}
.card-mark,
.card-words {
  width: 53px;
  height: 53px;
  background-color: #fff;
  color: #226146;
}
.card-mark svg {
  width: 53px;
  height: 53px;
  padding: 2px;
  fill: #226146;
}
.card-words {
  display: flex;
  flex-direction: column;
  align-items: center;
  padding-top: 8px;
  font-family: "Open Sans", "Noto Sans CJK SC", sans-serif;
  font-style: italic;
  white-space: nowrap;
}
.card-cn {
  font-size: 7px;
  font-weight: 700;
  line-height: 10px;
}
.card-en {
  font-size: 8px;
  font-weight: 700;
  line-height: 10px;
}
.card-exp {
  font-size: 12px;
  font-weight: 600;
  line-height: 14px;
}
.express-group {
  font-size: 10px;
  line-height: 18px;
}
.express-place {
  font-size: 8px;
  line-height: 16px;
}
.express-city {
  font-size: 8px;
  line-height: 8px;
}

/* Notepad window */
.window {
  position: absolute;
  left: 686px;
  top: 241px;
  width: 540px;
  height: 750px;
  display: flex;
  flex-direction: column;
  border-radius: 8px;
  background-color: #f9f9f9;
  box-shadow: 0 0 0 1px #47765f, 0 16px 40px rgba(0, 0, 0, 0.4);
}
.titlebar {
  display: flex;
  height: 41px;
  padding-left: 16px;
  border-radius: 8px 8px 0 0;
  background-color: #c7e6d8;
}
.app-icon {
  width: 16px;
  height: 16px;
  margin-top: 17px;
}
.tabs {
  display: flex;
  flex: 1;
  padding: 10px 0 0 16px;
}
.tab {
  display: flex;
  align-items: center;
  justify-content: space-between;
  width: 137px;
  height: 31px;
  padding: 0 17px 1px 9px;
  color: #5b6b64;
  white-space: nowrap;
}
.tab.active {
  border-radius: 8px 8px 0 0;
  background-color: #eef6f3;
  color: #111;
  font-weight: 500;
}
.tab .dot {
  width: 6px;
  height: 6px;
  border-radius: 50%;
  background-color: #7c8983;
}
.new-tab {
  width: 46px;
  height: 16px;
  align-self: center;
  border-left: 1px solid #b5d3c5;
}
.new-tab svg,
.controls svg {
  width: 10px;
  height: 10px;
  fill: none;
  stroke: #222;
}
.controls {
  display: flex;
}
.controls button {
  width: 46px;
  height: 28px;
}
.toolbar {
  display: flex;
  align-items: center;
  height: 33px;
  padding: 0 15px 0 14px;
  border-bottom: 1px solid #d9e8e2;
  background-color: #eef6f3;
  color: #1c1c1c;
  font-size: 14px;
}
.menus {
  display: flex;
  gap: 28px;
}
.toolbar svg {
  fill: none;
  stroke: #444;
}
.chevron {
  width: 8px;
  height: 5px;
}
.tool {
  width: 16px;
  height: 16px;
}
.heading,
.list {
  display: flex;
  align-items: center;
}
.heading {
  gap: 8px;
  margin-left: 6px;
}
.list {
  gap: 9px;
  margin-left: 22px;
}
.formats {
  display: flex;
  margin-left: 12px;
}
.formats button {
  display: grid;
  place-items: center;
  width: 32px;
}
.formats .bold {
  font-size: 15px;
  font-weight: 800;
  line-height: 20px;
}
.settings {
  display: grid;
  margin-left: auto;
}
.editor {
  position: relative;
  flex: 1;
  display: flex;
  font-size: 15px;
  line-height: 20px;
}
textarea {
  flex: 1;
  padding: 16px;
  border: none;
  outline: none;
  resize: none;
  background: none;
  color: #000;
  font: inherit;
}
/* Text being typed, then its candidates */
.composition {
  position: absolute;
  left: 226px;
  top: 136px;
  height: 20px;
  border-right: 1px solid #000;
}
.composition span {
  display: block;
  height: 18px;
  border-bottom: 2px dotted #000;
}
.ime {
  position: absolute;
  left: 227px;
  top: 157px;
  display: flex;
  align-items: center;
  gap: 4px;
  height: 34px;
  padding-left: 5px;
  border-radius: 8px 0 0 8px;
  background-color: #f9f9f9;
  box-shadow: 0 4px 12px rgba(0, 0, 0, 0.3);
  color: #1a1a1a;
  font-size: 14px;
  white-space: nowrap;
}
.candidate {
  display: flex;
  height: 26px;
  align-items: center;
  gap: 4px;
  padding: 0 10px;
}
.candidate b {
  width: 8px;
  color: #666;
  font-weight: 400;
}
.candidate.selected {
  border-radius: 4px;
  background: linear-gradient(#0067c0, #0067c0) left center / 3px 16px no-repeat #efefef;
}
.pager {
  display: flex;
  align-items: center;
  gap: 17px;
  height: 28px;
  padding: 0 2px 0 11px;
  border-left: 1px solid #e0e0e0;
}
.pager button {
  display: grid;
}
.pager svg {
  width: 6px;
  height: 8px;
}
.status {
  display: flex;
  align-items: center;
  height: 32px;
  padding-left: 14px;
  border-top: 1px solid #dde5e1;
  border-radius: 0 0 8px 8px;
  background-color: #eef6f3;
  color: #555;
  white-space: nowrap;
}
.status span {
  padding-left: 8px;
  border-right: 1px solid #dbe4e0;
}
.status .status-pos {
  width: 83px;
}
.status .status-count,
.status .status-type {
  width: 94px;
}
.status .status-zoom {
  width: 60px;
  padding-left: 12px;
}
.status .status-eol {
  width: 94px;
  padding: 0 2px 0 12px;
}
.status em {
  display: block;
  overflow: hidden;
  font-style: normal;
}
.status .status-enc {
  padding-left: 12px;
  border-right: none;
}

/* Taskbar */
.taskbar {
  position: relative;
  display: grid;
  grid-template-columns: 1fr auto 1fr;
  align-items: center;
  height: 48px;
  padding-bottom: 1px;
  border-top: 1px solid #9dc6b2;
  background-color: #c9eedd;
  color: #1c2b24;
}
.weather {
  display: flex;
  align-items: center;
  gap: 4px;
  padding-left: 18px;
  line-height: 16px;
  text-align: left;
}
.weather svg {
  width: 28px;
  height: 24px;
}
.apps {
  display: flex;
  align-items: center;
}
.app {
  position: relative;
  display: grid;
  place-items: center;
  width: 44px;
  height: 46px;
}
.app svg {
  width: 24px;
  height: 24px;
}
.app.running::after,
.app.current::after {
  content: "";
  position: absolute;
  bottom: 4px;
  width: 6px;
  height: 3px;
  border-radius: 2px;
  background-color: #7d9388;
}
.app.current::after {
  width: 16px;
  background-color: #0078d4;
}
.app.current {
  width: 38px;
  height: 38px;
  margin: 0 3px;
  border-radius: 4px;
  background-color: #e3f6ee;
}
.app.current::after {
  bottom: 0;
}
.search {
  display: flex;
  align-items: center;
  width: 219px;
  height: 31px;
  margin: 0 3px;
  padding: 0 4px 0 10px;
  border: 1px solid #b3d6c6;
  border-radius: 16px;
  background-color: #ecf8f3;
}
.search label {
  display: grid;
}
.search label svg {
  width: 15px;
  height: 15px;
  fill: none;
  stroke: #222;
  stroke-width: 2;
}
.search input {
  flex: 1;
  min-width: 0;
  padding: 0 0 0 10px;
  border: none;
  outline: none;
  background: none;
  font: inherit;
  font-size: 14px;
}
.search input::placeholder {
  color: #4d5a54;
}
.dish {
  width: 46px;
  height: 28px;
}
.tray {
  display: flex;
  align-items: center;
  justify-content: flex-end;
  padding-right: 18px;
}
.tray button {
  display: grid;
  place-items: center;
  width: 32px;
  height: 40px;
}
.tray svg {
  width: 16px;
  height: 16px;
  fill: none;
  stroke: #1c1c1c;
}
.tray .badge {
  fill: #0078d4;
  stroke: none;
}
.tray .sync {
  width: 28px;
}
.tray .lang {
  width: 38px;
  font-size: 15px;
}
.tray .system {
  display: flex;
  align-items: center;
  justify-content: center;
  gap: 8px;
  width: 64px;
}
.tray .system svg {
  width: 17px;
  height: 17px;
}
.clock {
  width: 66px;
  line-height: 16px;
  text-align: right;
}
```
